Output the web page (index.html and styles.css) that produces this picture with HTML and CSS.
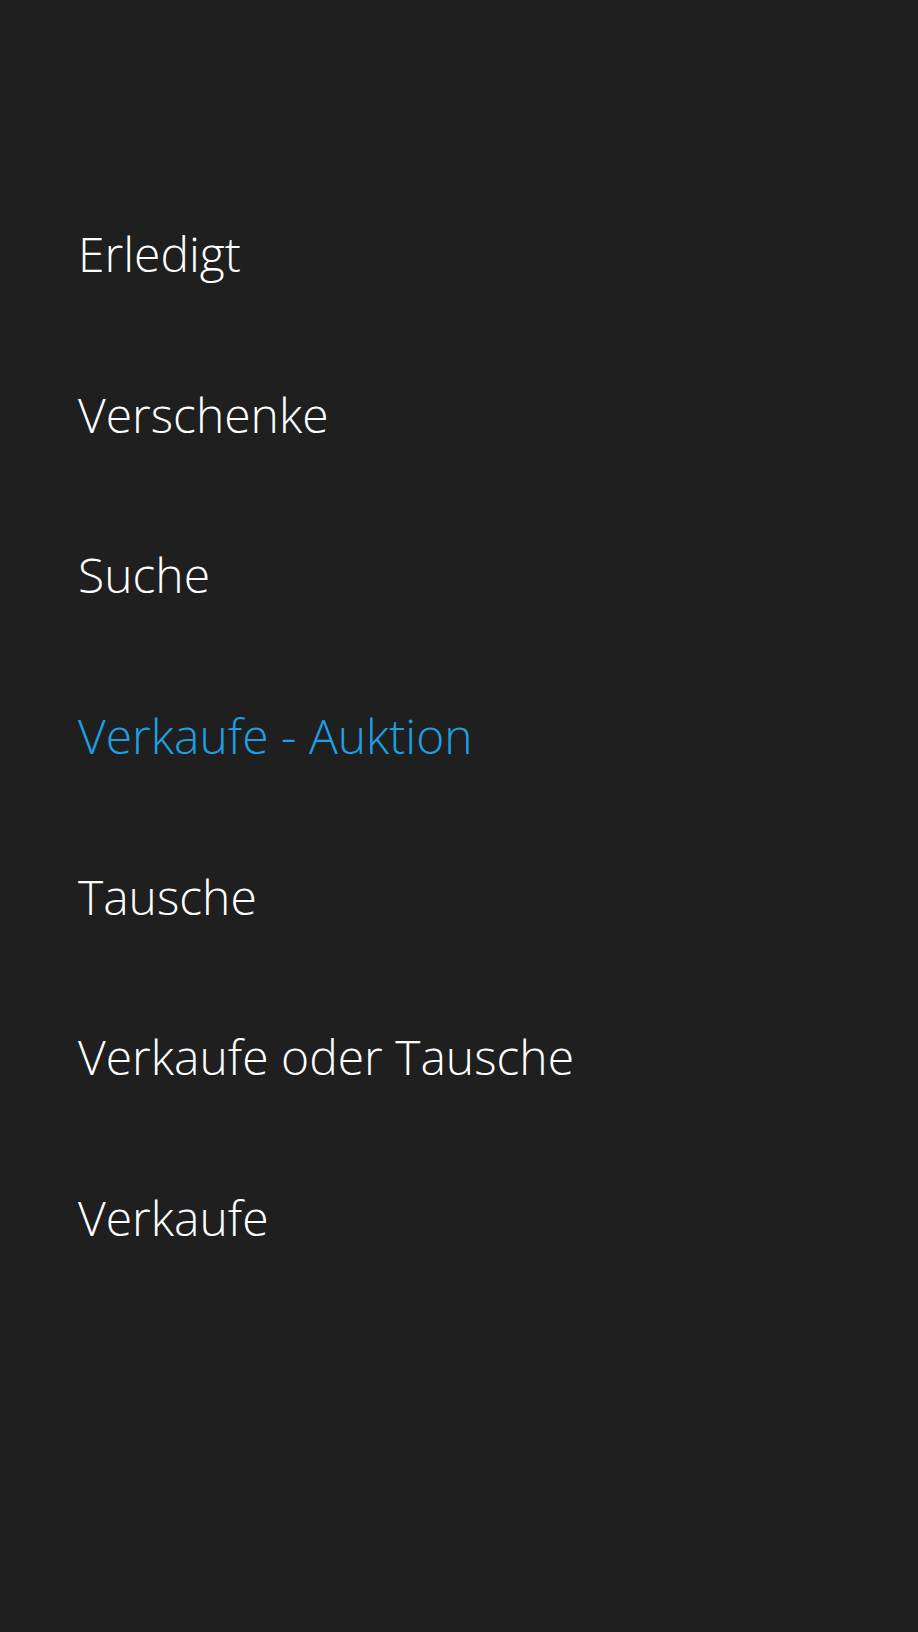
FILE: index.html
```html
<!DOCTYPE html>
<html lang="de">
<head>
    <meta charset="UTF-8">
    <meta name="viewport" content="width=device-width, initial-scale=1.0">
    <title>Kategorie</title>
    <link rel="stylesheet" href="styles.css">
</head>
<body>
<div class="picker">
    <ul class="options">
        <li class="option">Erledigt</li>
        <li class="option">Verschenke</li>
        <li class="option">Suche</li>
        <li class="option selected">Verkaufe - Auktion</li>
        <li class="option">Tausche</li>
        <li class="option">Verkaufe oder Tausche</li>
        <li class="option">Verkaufe</li>
    </ul>
</div>
</body>
</html>
```
FILE: styles.css
```css
* {
    margin: 0;
    padding: 0;
    box-sizing: border-box;
}

body {
    background: #1f1f1f;
    min-height: 100vh;
    font-family: 'Open Sans', 'Segoe UI', sans-serif;
}

.picker {
    padding: 174px 0 0 78px;
}

.options {
    list-style: none;
}

.option {
    font-size: 48px;
    font-weight: 300;
    line-height: 160.67px;
    color: #ffffff;
    white-space: nowrap;
}

.option.selected {
    color: #1ba1e2;
}
```
